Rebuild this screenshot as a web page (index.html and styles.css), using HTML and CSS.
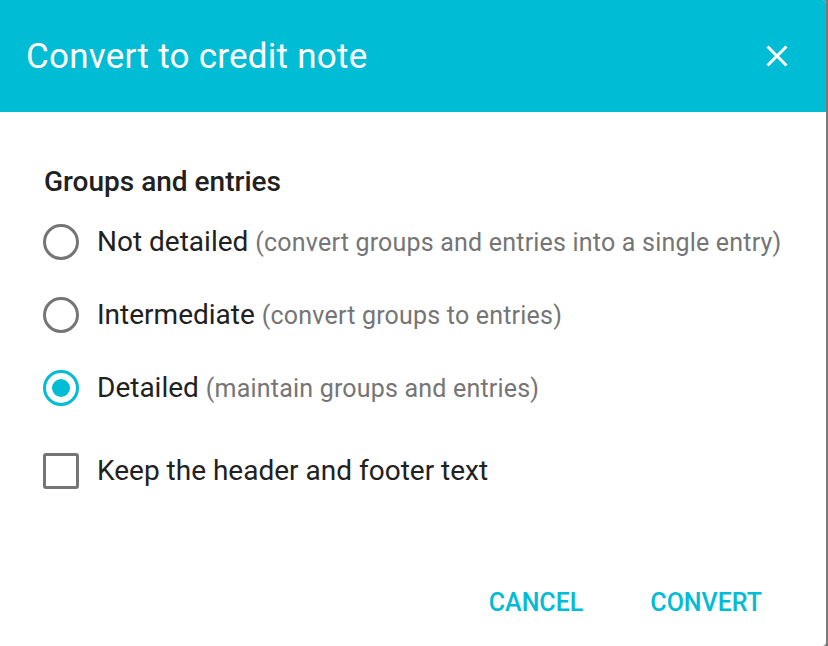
FILE: index.html
```html
<!DOCTYPE html>
<html lang="en">
<head>
    <meta charset="UTF-8">
    <meta name="viewport" content="width=device-width, initial-scale=1.0">
    <title>Convert to credit note</title>
    <link rel="stylesheet" href="styles.css">
</head>
<body>

<div class="dialog">
    <div class="dialog-header">
        <h1>Convert to credit note</h1>
        <button class="close" type="button" aria-label="Close">
            <svg width="24" height="24" viewBox="0 0 24 24"><path d="M19 6.41L17.59 5 12 10.59 6.41 5 5 6.41 10.59 12 5 17.59 6.41 19 12 13.41 17.59 19 19 17.59 13.41 12z" fill="#fff"/></svg>
        </button>
    </div>
    <div class="dialog-body">
        <h2>Groups and entries</h2>
        <label class="option">
            <span class="radio"></span>
            <span class="text">Not detailed <span class="hint">(convert groups and entries into a single entry)</span></span>
        </label>
        <label class="option">
            <span class="radio"></span>
            <span class="text">Intermediate <span class="hint">(convert groups to entries)</span></span>
        </label>
        <label class="option">
            <span class="radio checked"></span>
            <span class="text">Detailed <span class="hint">(maintain groups and entries)</span></span>
        </label>
        <label class="option check-option">
            <span class="checkbox"></span>
            <span class="text">Keep the header and footer text</span>
        </label>
    </div>
    <div class="dialog-actions">
        <button type="button">Cancel</button>
        <button type="button">Convert</button>
    </div>
</div>

</body>
</html>
```

FILE: styles.css
```css
body {
    margin: 0;
    background-color: #7a7a7a;
    font-family: Roboto, "Noto Sans", sans-serif;
}
.dialog {
    width: 826px;
    height: 646px;
    background-color: #fff;
    border-radius: 0 4px 4px 0;
    overflow: hidden;
    display: flex;
    flex-direction: column;
}
.dialog-header {
    height: 112px;
    flex-shrink: 0;
    background-color: #00bcd4;
    display: flex;
    align-items: center;
    justify-content: space-between;
    padding: 0 29px 0 26px;
}
.dialog-header h1 {
    margin: 0;
    color: #fff;
    font-size: 35px;
    font-weight: 400;
    letter-spacing: 0.25px;
}
.close {
    background: none;
    border: none;
    padding: 0;
    width: 40px;
    height: 40px;
    display: flex;
    align-items: center;
    justify-content: center;
    cursor: pointer;
}
.close svg {
    width: 36px;
    height: 36px;
}
.dialog-body {
    flex: 1;
    padding: 53px 40px 0 43px;
}
.dialog-body h2 {
    margin: 0 0 6px 1px;
    font-size: 28px;
    line-height: 34px;
    font-weight: 500;
    color: #212121;
}
.option {
    display: flex;
    align-items: center;
    height: 73px;
    cursor: pointer;
}
.check-option {
    margin-top: 10px;
}
.radio {
    width: 36px;
    height: 36px;
    box-sizing: border-box;
    border: 3px solid #757575;
    border-radius: 50%;
    flex-shrink: 0;
    display: flex;
    align-items: center;
    justify-content: center;
}
.radio.checked {
    border-color: #00bcd4;
}
.radio.checked::after {
    content: "";
    width: 18px;
    height: 18px;
    border-radius: 50%;
    background-color: #00bcd4;
}
.checkbox {
    width: 36px;
    height: 36px;
    box-sizing: border-box;
    border: 3px solid #757575;
    border-radius: 3px;
    flex-shrink: 0;
}
.text {
    margin-left: 18px;
    font-size: 28px;
    color: #212121;
    white-space: nowrap;
}
.hint {
    font-size: 25px;
    letter-spacing: 0.2px;
    color: #757575;
}
.dialog-actions {
    height: 88px;
    flex-shrink: 0;
    display: flex;
    justify-content: flex-end;
    align-items: center;
    gap: 67px;
    padding-right: 64px;
}
.dialog-actions button {
    background: none;
    border: none;
    padding: 0;
    font-family: inherit;
    font-size: 25px;
    font-weight: 500;
    text-transform: uppercase;
    color: #00bcd4;
    cursor: pointer;
}
```
